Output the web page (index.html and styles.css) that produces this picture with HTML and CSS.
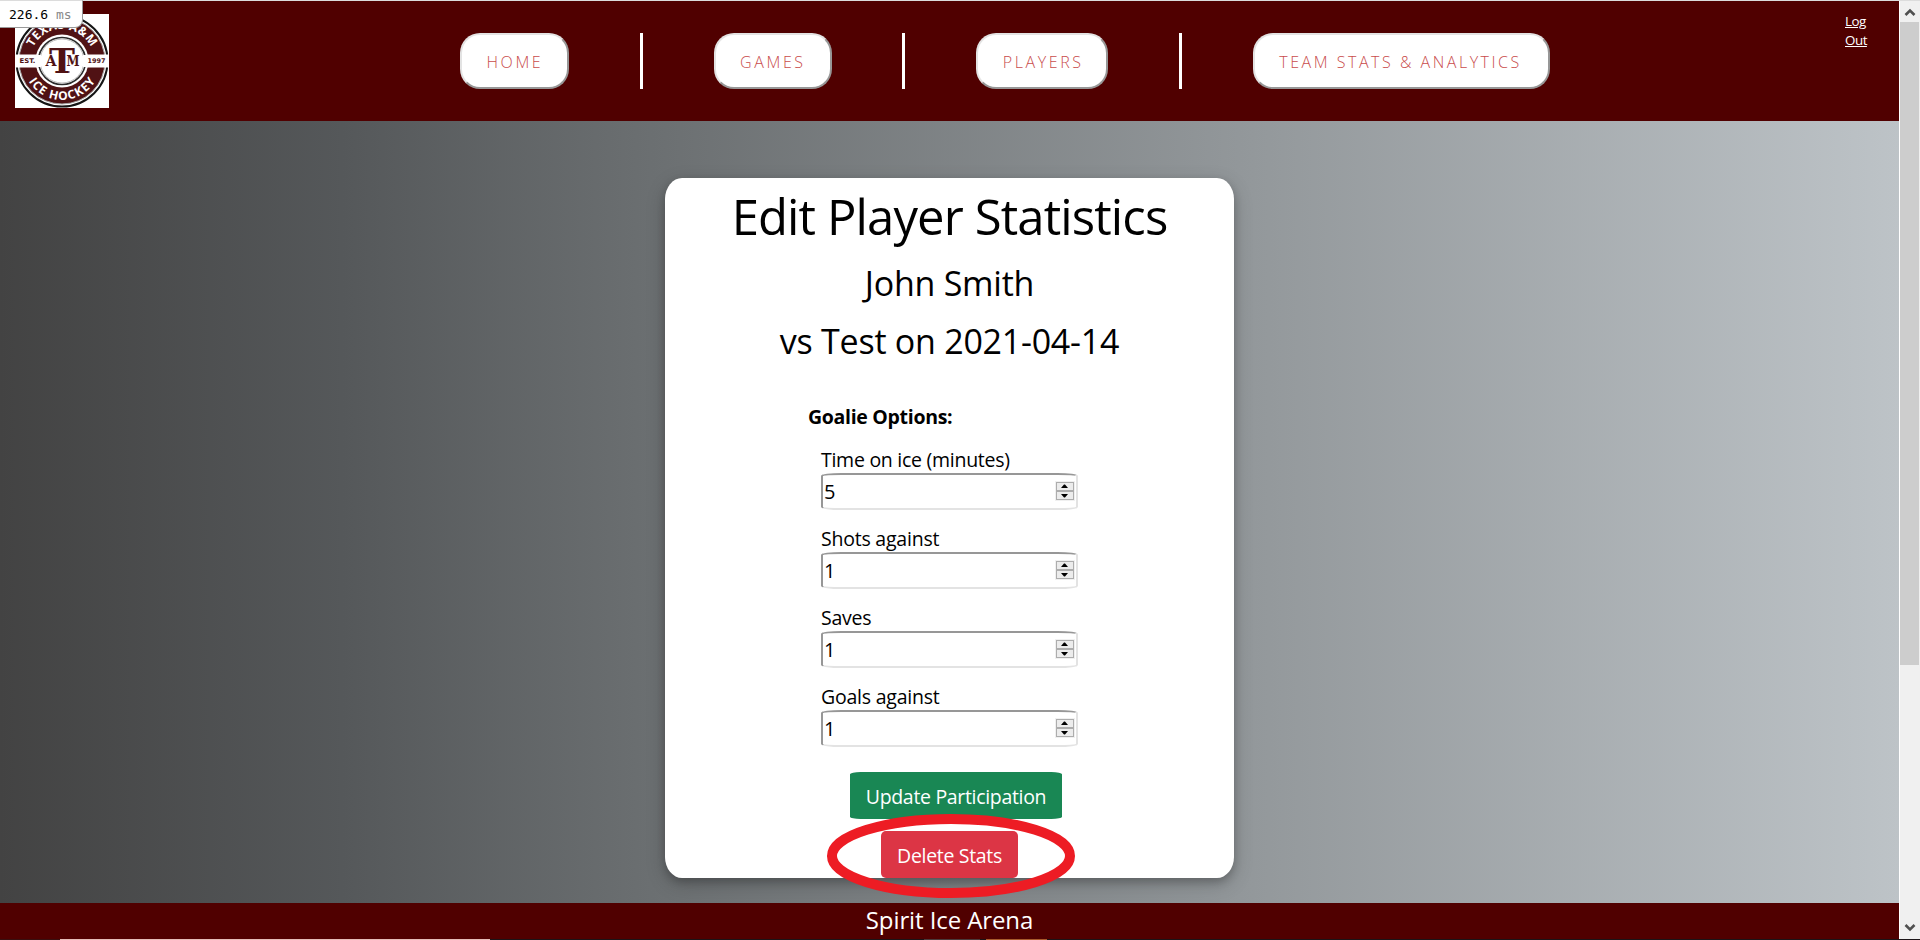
FILE: index.html
```html
<!DOCTYPE html>
<html lang="en">
<head>
<meta charset="utf-8">
<title>Edit Player Statistics</title>
<link rel="stylesheet" href="styles.css">
</head>
<body>
<div class="window">
  <div class="page">
    <header class="header">
      <svg class="logo" width="94" height="94" viewBox="0 0 94 94">
        <defs>
          <path id="arc-top" d="M15 47 A32 32 0 0 1 79 47"/>
          <path id="arc-bottom" d="M8 47 A39 39 0 0 0 86 47"/>
        </defs>
        <rect width="94" height="94" fill="#fff"/>
        <circle cx="47" cy="47" r="45.5" fill="#fff" stroke="#151515" stroke-width="2"/>
        <circle cx="47" cy="47" r="43" fill="#501214" stroke="#a5a5a5" stroke-width="1"/>
        <circle cx="47" cy="47" r="26.5" fill="#fff"/>
        <rect x="0" y="40.5" width="94" height="13" fill="#fff"/>
        <circle cx="47" cy="47" r="23.5" fill="#fff" stroke="#2b2b2b" stroke-width="1.6"/>
        <circle cx="47" cy="47" r="22" fill="none" stroke="#bbb" stroke-width="1"/>
        <rect x="20" y="41" width="6" height="12" fill="#fff"/>
        <rect x="68" y="41" width="6" height="12" fill="#fff"/>
        <text class="logo-arc"><textPath href="#arc-top" startOffset="50%" text-anchor="middle" textLength="72">TEXAS A&amp;M</textPath></text>
        <text class="logo-arc"><textPath href="#arc-bottom" startOffset="50%" text-anchor="middle" textLength="80">ICE HOCKEY</textPath></text>
        <text class="logo-year" x="4.5" y="49.3" textLength="16" lengthAdjust="spacingAndGlyphs">EST.</text>
        <text class="logo-year" x="72.5" y="49.3" textLength="18" lengthAdjust="spacingAndGlyphs">1997</text>
        <text class="logo-letter" x="30.5" y="52" textLength="11" lengthAdjust="spacingAndGlyphs">A</text>
        <text class="logo-letter" x="51.5" y="52" textLength="13" lengthAdjust="spacingAndGlyphs">M</text>
        <text class="logo-t" x="34" y="58.500" textLength="26" lengthAdjust="spacingAndGlyphs">T</text>
        <circle cx="54" cy="58" r=".7" fill="#501214"/>
      </svg>
      <nav class="nav">
        <a class="nav-btn home">HOME</a><i class="rule"></i>
        <a class="nav-btn games">GAMES</a><i class="rule"></i>
        <a class="nav-btn players">PLAYERS</a><i class="rule"></i>
        <a class="nav-btn team">TEAM STATS &amp; ANALYTICS</a>
      </nav>
      <a class="logout">Log<br>Out</a>
    </header>
    <main class="main">
      <section class="card">
        <h1 class="title">Edit Player Statistics</h1>
        <h2 class="subtitle name">John Smith</h2>
        <h2 class="subtitle">vs Test on 2021-04-14</h2>
        <h3 class="options">Goalie Options:</h3>
        <div class="fields">
          <div class="field"><label class="label">Time on ice (minutes)</label>
            <div class="input"><span>5</span><svg class="spinner" width="20" height="20"><use href="#spin"/></svg></div></div>
          <div class="field"><label class="label shots">Shots against</label>
            <div class="input"><span>1</span><svg class="spinner" width="20" height="20"><use href="#spin"/></svg></div></div>
          <div class="field"><label class="label">Saves</label>
            <div class="input"><span>1</span><svg class="spinner" width="20" height="20"><use href="#spin"/></svg></div></div>
          <div class="field"><label class="label shots">Goals against</label>
            <div class="input"><span>1</span><svg class="spinner" width="20" height="20"><use href="#spin"/></svg></div></div>
        </div>
        <div class="btn update">Update Participation</div>
        <div class="btn delete">Delete Stats
          <svg class="ring" width="250" height="86"><ellipse cx="125" cy="43" rx="119" ry="37" fill="none" stroke="#ed1c24" stroke-width="10"/></svg>
        </div>
      </section>
    </main>
    <footer class="footer">Spirit Ice Arena</footer>
  </div>
  <aside class="scrollbar">
    <svg width="20" height="21"><path d="M5.500 14 L10 9.500 L14.500 14" fill="none" stroke="#505050" stroke-width="2.600"/></svg>
    <div class="thumb"></div>
    <svg class="down" width="20" height="21"><path d="M5.500 7 L10 11.500 L14.500 7" fill="none" stroke="#505050" stroke-width="2.600"/></svg>
  </aside>
</div>
<div class="taskbar"></div>
<div class="timer">226.6 <span class="unit">ms</span></div>
<svg class="defs" width="0" height="0">
  <defs>
    <g id="spin">
      <rect width="20" height="20" fill="#f0f0f0"/>
      <rect x="1.500" y="1.500" width="17" height="8" fill="#ececec" stroke="#adadad"/>
      <rect x="1.500" y="10.500" width="17" height="8" fill="#ececec" stroke="#adadad"/>
      <path d="M6 7 L9 3.500 H10 L13 7 Z M6 13 L9 16.500 H10 L13 13 Z" fill="#000"/>
    </g>
  </defs>
</svg>
</body>
</html>
```
FILE: styles.css
```css
* { box-sizing: border-box; }
body {
  margin: 0;
  width: 1920px;
  height: 940px;
  overflow: hidden;
  font-family: "Open Sans", sans-serif;
  font-size: 20px;
  color: #000;
}
.window {
  display: flex;
  height: 939px;
  border-top: 1px solid #dcdcdc;
}
.page { width: 1899px; }
.header {
  display: flex;
  align-items: flex-start;
  height: 120px;
  background: #500000;
}
.logo { margin: 13px 0 0 15px; }
.logo-arc { font: bold 12px "Open Sans", sans-serif; fill: #fff; }
.logo-year { font: bold 6.5px "DejaVu Sans", sans-serif; fill: #501214; }
.logo-letter { font: bold 14px "DejaVu Serif", serif; fill: #501214; }
.logo-t {
  font: bold 33px "DejaVu Serif", serif;
  fill: #501214;
  stroke: #fff;
  stroke-width: 1.5px;
  paint-order: stroke;
}
.nav {
  display: flex;
  gap: 70.8px;
  margin: 32px 0 0 351px;
  width: 1385px;
}
.nav-btn {
  height: 56px;
  flex: none;
  padding-left: 24.5px;
  border: 2px solid;
  border-color: #e3e3e3 #979797 #979797 #e3e3e3;
  border-radius: 20px;
  background: #fff;
  color: #c94c4c;
  font-weight: 300;
  font-size: 16px;
  line-height: 54px;
  letter-spacing: 2.6px;
  white-space: nowrap;
}
.home { width: 109px; }
.games { width: 118px; }
.players { width: 132px; }
.team { width: 297px; letter-spacing: 2.53px; }
.rule { width: 3px; height: 56px; flex: none; background: #fff; }
.logout {
  color: #fff;
  font-size: 13.4px;
  line-height: 19px;
  letter-spacing: -.5px;
  text-decoration: underline;
  margin: 11px 0 0 0;
}
.main {
  height: 782px;
  padding: 57px 0 0 665px;
  background: linear-gradient(to right, #434343, #55585a 18%, #6a6e70 33.5%, #93989b 66%, #bdc3c7);
}
.card {
  width: 569px;
  height: 700px;
  border-radius: 3%;
  background: #fff;
  box-shadow: 0 4px 8px rgba(0, 0, 0, .2), 0 6px 20px rgba(0, 0, 0, .19);
}
.title, .subtitle, .options { margin: 0; font-weight: 400; text-align: center; }
.title { font-size: 49px; line-height: 77px; letter-spacing: -.88px; }
.subtitle { font-size: 34px; line-height: 57.5px; letter-spacing: -.25px; }
.options {
  margin: 32px 0 14px 143px;
  font-size: 19.5px;
  font-weight: 700;
  line-height: 30px;
  letter-spacing: -.3px;
  text-align: left;
}
.fields { display: grid; gap: 14px; margin: -1px 0 0 156px; width: 257px; }
.label {
  display: block;
  height: 28px;
  font-size: 19.5px;
  line-height: 30px;
  letter-spacing: -.27px;
}
.label.shots { letter-spacing: -.22px; }
.input {
  display: flex;
  justify-content: space-between;
  align-items: center;
  height: 37px;
  padding: 0 1px 0 1px;
  border: 2px solid;
  border-color: #979797 #e3e3e3 #e3e3e3 #979797;
  border-radius: 8%;
  background: #fff;
}
.spinner { margin-top: -2px; }
.btn {
  height: 47px;
  line-height: 49px;
  font-size: 19.5px;
  letter-spacing: -.32px;
  color: #fff;
  text-align: center;
}
.update {
  width: 212px;
  margin: 25px 0 12px 185px;
  border-radius: 5%;
  background: #198754;
}
.delete {
  position: relative;
  width: 137px;
  margin-left: 216px;
  border-radius: 5px;
  background: #dc3545;
}
.ring { position: absolute; left: -55px; top: -18px; }
.footer {
  height: 36px;
  background: #500000;
  color: #fff;
  font-size: 24px;
  line-height: 34px;
  letter-spacing: -.1px;
  text-align: center;
}
.scrollbar {
  display: flex;
  flex-direction: column;
  width: 21px;
  background: #f0f0f0;
  border-left: 1px solid #fff;
}
.thumb { width: 19px; height: 643px; background: #cdcdcd; }
.down { margin-top: auto; }
.taskbar {
  height: 1px;
  background: linear-gradient(to right, #3a1010 60px, #e5bcb8 60px 490px, #1c1518 490px 924px, #4a3b3b 924px 980px, #1c1518 980px 986px, #a85a2c 986px 1047px, #1c1518 1047px);
}
.timer {
  position: absolute;
  left: 0;
  top: 0;
  width: 83px;
  height: 28px;
  padding-left: 9px;
  border: 1px solid #999;
  border-width: 0 1px 1px 0;
  border-top: 1px solid #dcdcdc;
  border-bottom-right-radius: 8px;
  background: #fff;
  font: 13px/27px "DejaVu Sans Mono", monospace;
  white-space: nowrap;
}
.unit { color: #888; }
.defs { position: absolute; }
```
